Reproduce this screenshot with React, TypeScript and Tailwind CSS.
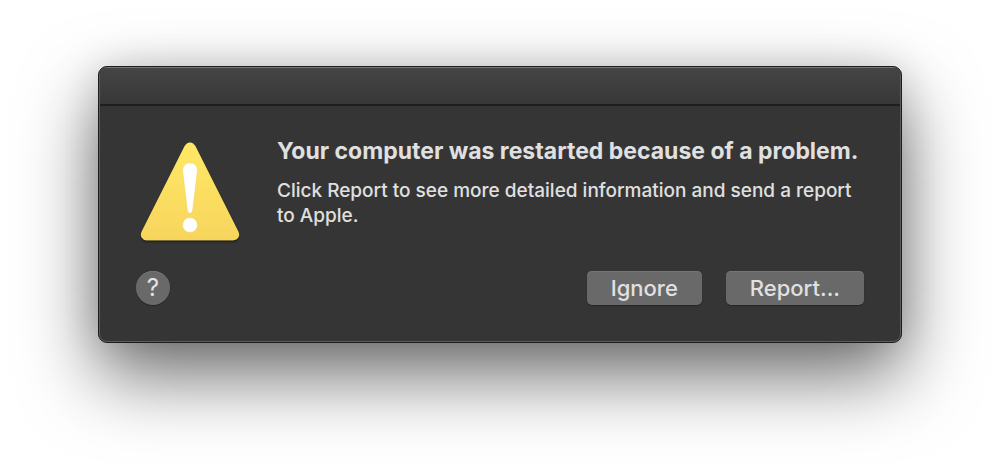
function WarningIcon() {
  return (
    <svg viewBox="0 0 108 108" className="size-[108px] shrink-0" role="img" aria-label="Warning">
      <defs>
        <linearGradient id="warning-fill" x1="0" y1="0" x2="0" y2="1">
          <stop offset="0" stopColor="#ffe866" />
          <stop offset="1" stopColor="#f7d55c" />
        </linearGradient>
        <filter id="warning-shadow" x="-10%" y="-10%" width="120%" height="120%">
          <feDropShadow dx="0" dy="1.5" stdDeviation="1.3" floodColor="#000" floodOpacity="0.5" />
        </filter>
      </defs>
      <path
        d="M48.5 7.2Q50.6 3.4 54 3.4T59.5 7.2L102.2 92.2Q104 96 102.3 98.6T97.5 101.3H10.5Q7.4 101.3 5.7 98.6T5.8 92.2Z"
        fill="url(#warning-fill)"
        filter="url(#warning-shadow)"
      />
      <g fill="#fff" stroke="#f3cf55" strokeWidth="0.5">
        <path d="M46.6 32C46.4 27 49.4 23.8 54 23.8S61.6 27 61.4 32L56.7 71Q56.2 74.2 54 74.2T51.3 71Z" />
        <circle cx="54" cy="86" r="7.5" />
      </g>
    </svg>
  );
}

const buttonClass =
  "h-[34px] rounded-[5px] bg-[#696969] px-6 text-[22px] leading-[34px] font-medium text-[#e0e0e0] shadow-[inset_0_1px_0_#757575,0_1px_1px_rgba(0,0,0,0.3)]";

export default function App() {
  return (
    <main className="bg-white px-[98px] pt-[66px] pb-[129px] font-['Inter','Liberation_Sans',sans-serif]">
      <section
        role="alertdialog"
        aria-labelledby="alert-title"
        aria-describedby="alert-text"
        className="overflow-hidden rounded-[9px] border border-[#1c1c1c] bg-[#353535] shadow-[0_32px_76px_rgba(0,0,0,0.58),0_0_36px_rgba(0,0,0,0.12)]"
      >
        <div className="rounded-[8px] border border-[#5c5c5c] border-t-[#777777]">
          <header className="h-[38px] border-b-2 border-[#1e1e1e] bg-linear-to-b from-[#454545] to-[#373737]" />
          <div className="pt-[31px] pr-9 pb-9 pl-9">
            <div className="flex items-end gap-[33px]">
              <WarningIcon />
              <div className="h-[110px] min-w-0 flex-1 text-[#e0e0e0]">
                <h1 id="alert-title" className="text-[23px] leading-7 font-bold">
                  Your computer was restarted because of a problem.
                </h1>
                <p id="alert-text" className="mt-[13px] text-[19px] leading-[25px] font-medium">
                  Click Report to see more detailed information and send a report to Apple.
                </p>
              </div>
            </div>
            <footer className="mt-6 flex items-center">
              <button
                type="button"
                aria-label="Help"
                className="size-[34px] rounded-full bg-[#696969] text-center text-[24px] leading-[34px] text-[#e4e4e4] shadow-[inset_0_1px_0_#757575,0_1px_1px_rgba(0,0,0,0.3)]"
              >
                ?
              </button>
              <div className="ml-auto flex gap-6">
                <button type="button" className={buttonClass}>Ignore</button>
                <button type="button" className={buttonClass}>Report...</button>
              </div>
            </footer>
          </div>
        </div>
      </section>
    </main>
  );
}
